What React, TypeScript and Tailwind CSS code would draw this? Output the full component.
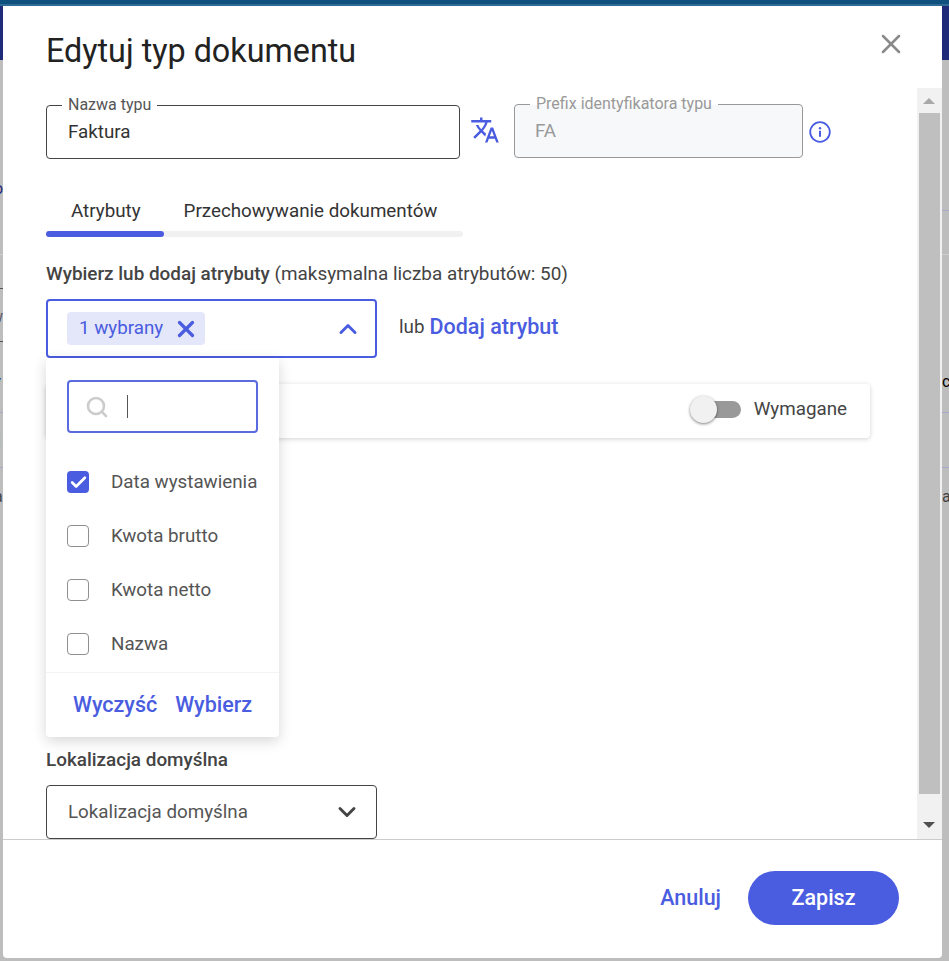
import { ChevronDown, ChevronUp, X, Search, Check } from 'lucide-react';

const options = [
  { name: 'Data wystawienia', checked: true },
  { name: 'Kwota brutto', checked: false },
  { name: 'Kwota netto', checked: false },
  { name: 'Nazwa', checked: false },
];

function TranslateIcon() {
  return (
    <svg viewBox="0 0 24 24" className="h-[30px] w-[30px] fill-[#4a5ce0]">
      <path d="M12.87 15.07l-2.54-2.51.03-.03c1.74-1.94 2.98-4.17 3.71-6.53H17V4h-7V2H8v2H1v1.99h11.17C11.5 7.92 10.44 9.75 9 11.35 8.07 10.32 7.3 9.19 6.69 8h-2c.73 1.63 1.73 3.17 2.98 4.56l-5.09 5.02L4 19l5-5 3.11 3.11.76-2.04zM18.5 10h-2L12 22h2l1.12-3h4.75L21 22h2l-4.5-12zm-2.62 7l1.62-4.33L19.12 17h-3.24z" />
    </svg>
  );
}

function InfoIcon() {
  return (
    <svg viewBox="0 0 22 22" className="h-[22px] w-[22px]">
      <circle cx="11" cy="11" r="9.8" fill="none" stroke="#4a5ce0" strokeWidth="1.8" />
      <circle cx="11" cy="7.2" r="1.2" fill="#4a5ce0" />
      <rect x="10" y="9.8" width="2" height="6" fill="#4a5ce0" />
    </svg>
  );
}

function Backdrop() {
  return (
    <>
      <div className="absolute left-0 top-[6px] h-[54px] w-full bg-[#1f2a78]" />
      <div className="absolute left-0 top-[254px] h-px w-[3px] bg-[#cfcfcf]" />
      <div className="absolute left-0 top-[288px] h-px w-[3px] bg-[#555555]" />
      <div className="absolute left-0 top-[341px] h-px w-[3px] bg-[#555555]" />
      <div className="absolute left-0 top-[412px] h-px w-[3px] bg-[#a9a9c9]" />
      <div className="absolute left-0 top-[467px] h-px w-[3px] bg-[#a9a9c9]" />
      <div className="absolute right-0 top-[210px] h-px w-[7px] bg-[#a9a9c9]" />
      <div className="absolute right-0 top-[254px] h-px w-[7px] bg-[#cfcfcf]" />
      <div className="absolute right-0 top-[412px] h-px w-[7px] bg-[#a9a9c9]" />
      <div className="absolute right-0 top-[467px] h-px w-[7px] bg-[#a9a9c9]" />
      <span className="absolute -left-[6px] top-[177px] text-[16px] text-[#1f2a78]">o</span>
      <span className="absolute -left-[9px] top-[305px] text-[16px] text-[#556]">w</span>
      <span className="absolute -left-[7px] top-[371px] text-[20px] text-black">/</span>
      <span className="absolute -left-[3px] top-[429px] text-[16px] text-[#7a1f1f]">i</span>
      <span className="absolute -left-[6px] top-[485px] text-[16px] text-[#444]">a</span>
      <span className="absolute left-[942px] top-[370px] text-[16px] text-black">c</span>
      <span className="absolute left-[942px] top-[485px] text-[16px] text-[#444]">a</span>
    </>
  );
}

export default function App() {
  return (
    <div className="relative h-[961px] w-[949px] overflow-hidden bg-[#bdbdbd] font-['Roboto',sans-serif]">
      <Backdrop />
      <div className="relative h-[4px] bg-[#10507f]" />
      <div className="relative h-[2px] bg-[#2e6a94]" />

      <div className="relative ml-[3px] flex h-[952px] w-[939px] flex-col rounded-b-[4px] bg-white">
        <div className="flex h-[82px] shrink-0 items-start justify-between pl-[43px] pr-[35px]">
          <h1 className="mt-[26px] text-[32.3px] leading-[38px] font-normal text-[#222222]">Edytuj typ dokumentu</h1>
          <button className="mt-[22px] text-[#8a8a8a]">
            <X size={32} strokeWidth={1.9} />
          </button>
        </div>

        <div className="flex h-[751px] shrink-0">
          <div className="relative w-[914px] overflow-hidden pl-[43px]">
            <div className="mt-[17px] flex items-start">
              <div className="relative flex h-[54px] w-[414px] items-center rounded-[4px] border border-[#444444] pl-[21px] text-[18.8px] text-[#333333]">
                <span className="absolute -top-[10px] left-[15px] bg-white px-[6px] text-[16px] leading-[18px] text-[#555555]">Nazwa typu</span>
                Faktura
              </div>
              <div className="ml-[10px] mt-[10px]">
                <TranslateIcon />
              </div>
              <div className="relative -mt-px ml-[14px] flex h-[54px] w-[289px] items-center rounded-[4px] border border-[#999999] bg-[#f6f8fa] pl-[20px] text-[18.8px] text-[#999999]">
                <span className="absolute -top-[10px] left-[15px] bg-[linear-gradient(#ffffff_55%,#f6f8fa_55%)] px-[6px] text-[16px] leading-[18px] text-[#999999]">Prefix identyfikatora typu</span>
                FA
              </div>
              <div className="ml-[6px] mt-[16px]">
                <InfoIcon />
              </div>
            </div>

            <div className="mt-[36px] w-[417px]">
              <div className="flex h-[36px] items-start text-[18.8px] leading-[32px] text-[#333333]">
                <span className="ml-[25px]">Atrybuty</span>
                <span className="ml-[43px]">Przechowywanie dokumentów</span>
              </div>
              <div className="h-[6px] rounded-full bg-[#f1f1f1]">
                <div className="h-full w-[118px] rounded-full bg-[#4a5ce0]" />
              </div>
            </div>

            <p className="mt-[26px] text-[18.9px] leading-[22px] text-[#444444]">
              <span className="font-medium">Wybierz lub dodaj atrybuty</span> (maksymalna liczba atrybutów: 50)
            </p>

            <div className="relative mt-[14px] flex items-center">
              <div className="flex h-[59px] w-[331px] items-center justify-between rounded-[4px] border-2 border-[#4a5ce0] pl-[19px] pr-[13px]">
                <div className="flex h-[33px] w-[138px] items-center rounded-[4px] bg-[#e4e6fa] pl-[12px] text-[18.8px] text-[#4a5ce0]">
                  1 wybrany
                  <X size={26} strokeWidth={3} className="ml-[10px] shrink-0" />
                </div>
                <ChevronUp size={28} strokeWidth={2.5} className="text-[#4a5ce0]" />
              </div>
              <span className="mb-[2px] ml-[22px] text-[18.8px] text-[#444444]">lub</span>
              <span className="mb-[2px] ml-[5px] text-[21.5px] font-medium text-[#4a5ce0]">Dodaj atrybut</span>

              <div className="absolute left-0 top-[59px] z-10 h-[379px] w-[233px] rounded-b-[4px] bg-white shadow-[0_4px_14px_rgba(0,0,0,0.16)]">
                <div className="ml-[21px] mt-[22px] flex h-[53px] w-[191px] items-center rounded-[4px] border-2 border-[#5a6be0] pl-[16px]">
                  <Search size={24} strokeWidth={2.6} className="text-[#cccccc]" />
                  <div className="ml-[18px] h-[23px] w-px bg-[#555555]" />
                </div>
                <div className="mt-[22px] flex flex-col">
                  {options.map((option) => (
                    <div key={option.name} className="flex h-[54px] items-center pl-[21px]">
                      {option.checked ? (
                        <div className="flex h-[22px] w-[22px] items-center justify-center rounded-[4px] bg-[#4a5ce0]">
                          <Check size={19} strokeWidth={3.4} className="text-white" />
                        </div>
                      ) : (
                        <div className="h-[22px] w-[22px] rounded-[4px] border border-[#8f8f8f] bg-white" />
                      )}
                      <span className="ml-[22px] text-[18.8px] text-[#555555]">{option.name}</span>
                    </div>
                  ))}
                </div>
                <div className="mt-px flex h-[65px] items-center gap-[18px] border-t border-[#f4f4f4] pl-[27px] text-[21.5px] font-medium text-[#4a5ce0]">
                  <span>Wyczyść</span>
                  <span>Wybierz</span>
                </div>
              </div>
            </div>

            <div className="mt-[26px] flex h-[54px] w-[824px] items-center justify-end rounded-[4px] pb-[4px] pr-[23px] shadow-[0_1px_5px_rgba(0,0,0,0.18)]">
              <div className="relative mr-[13px] h-[17px] w-[38px] rounded-full bg-[#999999]">
                <div className="absolute -left-[13px] -top-[5px] h-[27px] w-[27px] rounded-full bg-[#f1f1f1] shadow-[0_1px_3px_rgba(0,0,0,0.5)]" />
              </div>
              <span className="text-[18.8px] text-[#444444]">Wymagane</span>
            </div>

            <p className="mt-[311px] text-[18.9px] leading-[22px] font-medium text-[#444444]">Lokalizacja domyślna</p>
            <div className="mt-[14px] flex h-[54px] w-[331px] items-center justify-between rounded-[4px] border border-[#444444] pl-[21px] pr-[15px] text-[18.8px] text-[#555555]">
              Lokalizacja domyślna
              <ChevronDown size={28} strokeWidth={2.5} className="text-[#444444]" />
            </div>
          </div>

          <div className="flex w-[25px] flex-col items-center bg-[#f1f1f1] pr-px">
            <div className="flex h-[25px] w-full shrink-0 items-center justify-center">
              <div className="h-0 w-0 border-x-[6px] border-b-[6px] border-x-transparent border-b-[#a8a8a8]" />
            </div>
            <div className="h-[681px] w-[21px] bg-[#bfbfbf]" />
            <div className="flex h-[45px] w-full items-center justify-center pt-[17px]">
              <div className="h-0 w-0 border-x-[6px] border-t-[6px] border-x-transparent border-t-[#505050]" />
            </div>
          </div>
        </div>

        <div className="flex h-[119px] items-start justify-end border-t border-[#cccccc] pr-[43px]">
          <span className="mt-[45px] text-[21.5px] leading-[26px] font-medium text-[#4a5ce0]">Anuluj</span>
          <button className="ml-[27px] mt-[31px] h-[54px] w-[151px] rounded-full bg-[#4a5ce0] text-[21.5px] font-medium text-white">Zapisz</button>
        </div>
      </div>
    </div>
  );
}
